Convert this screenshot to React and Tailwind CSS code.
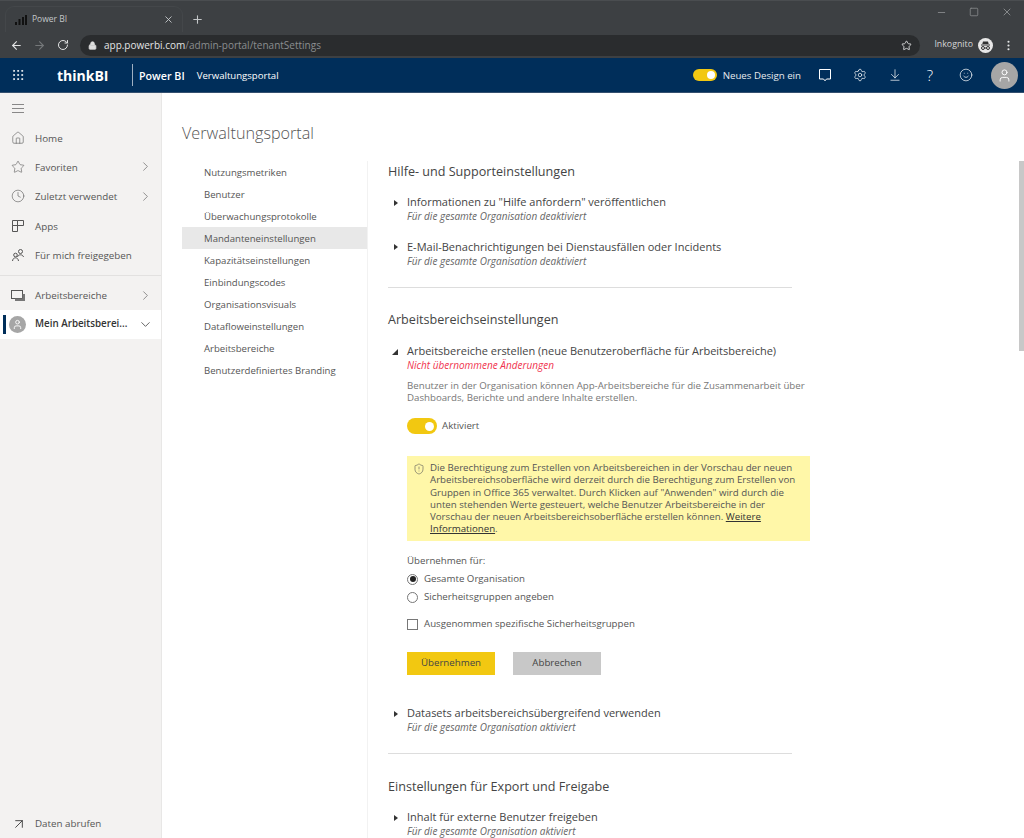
import React from 'react';
import {
  ArrowLeft, ArrowRight, RotateCw, Lock, Star, EllipsisVertical, X, Plus, Minus, Square,
  Grip, Settings, ArrowDownToLine, Smile, User, Clock, Home,
  ChevronRight, ChevronDown, ArrowUpRight, ShieldAlert,
} from 'lucide-react';

const font = 'font-["Open_Sans","Liberation_Sans",sans-serif]';

function AppsIcon() {
  return (
    <svg width="14" height="14" viewBox="0 0 14 14" fill="none" stroke="#555" strokeWidth="1">
      <path d="M1.5 1.5h5v5h-5zM6.5 1.5h6v5h-6zM1.5 6.5h5v6h-5z" />
    </svg>
  );
}

function SharedIcon() {
  return (
    <svg width="14" height="14" viewBox="0 0 14 14" fill="none" stroke="#555" strokeWidth="1">
      <circle cx="9.5" cy="3.5" r="2" />
      <path d="M6.5 9c.3-1.4 1.5-2.2 3-2.2s2.7.8 3 2.2" />
      <circle cx="4.5" cy="7" r="1.8" />
      <path d="M1.5 13c.2-2 1.4-3.2 3-3.2s2.8 1.2 3 3.2" />
    </svg>
  );
}

function WorkspaceIcon() {
  return (
    <svg width="15" height="13" viewBox="0 0 15 13">
      <rect x="0.5" y="1.5" width="11" height="8" fill="none" stroke="#555" />
      <path d="M4 9.5h7.5V5H14v7H4z" fill="#777" />
    </svg>
  );
}

function ChatIcon() {
  return (
    <svg width="14" height="14" viewBox="0 0 14 14" fill="none" stroke="currentColor" strokeWidth="1" className="ml-[17px]">
      <path d="M1.5 1.5h11V11H8.5L7 12.8 5.5 11h-4z" />
    </svg>
  );
}

function BarsIcon() {
  return (
    <svg width="12" height="10" viewBox="0 0 12 10" fill="#111">
      <rect x="0" y="7" width="2" height="3" />
      <rect x="3.5" y="4" width="2" height="6" />
      <rect x="7" y="2" width="2" height="8" />
      <rect x="10" y="0" width="2" height="10" />
    </svg>
  );
}

function IncognitoIcon() {
  return (
    <svg width="15" height="15" viewBox="0 0 15 15">
      <circle cx="7.5" cy="7.5" r="7.5" fill="#e8e8e8" />
      <path d="M3 6.5h9v1H3zM5 3.5h5l.7 2.5H4.3z" fill="#333" />
      <circle cx="5" cy="10" r="1.5" fill="none" stroke="#333" />
      <circle cx="10" cy="10" r="1.5" fill="none" stroke="#333" />
      <path d="M6.5 10h2" stroke="#333" />
    </svg>
  );
}

function Caret({ open }) {
  return (
    <svg width="19" height="14" viewBox="0 0 19 14" fill="#333" className="shrink-0">
      {open ? <polygon points="4,10 10,10 10,4" /> : <polygon points="6,4 10,7 6,10" />}
    </svg>
  );
}

function NavRow({ icon, label, chevron }) {
  return (
    <div className="h-[29.3px] flex items-center pl-[11px] pr-[8px] text-[#555]">
      <span className="w-[24px] flex">{icon}</span>
      <span className="flex-1 pt-[3px] text-[9.8px]">{label}</span>
      {chevron && <ChevronRight size={15} strokeWidth={1} />}
    </div>
  );
}

function Collapsed({ title, note }) {
  return (
    <div className="h-[44.5px]">
      <div className="flex items-center h-[14px] pt-[1px]">
        <Caret />
        <span className="text-[11px] text-[#444]">{title}</span>
      </div>
      <div className="pl-[19px] text-[10px] leading-[14px] italic text-[#666]">{note}</div>
    </div>
  );
}

const adminLinks = [
  'Nutzungsmetriken', 'Benutzer', 'Überwachungsprotokolle', 'Mandanteneinstellungen', 'Kapazitätseinstellungen',
  'Einbindungscodes', 'Organisationsvisuals', 'Datafloweinstellungen', 'Arbeitsbereiche', 'Benutzerdefiniertes Branding',
];

export default function App() {
  return (
    <div className={`w-[1024px] h-[838px] overflow-hidden flex flex-col bg-white ${font}`}>
      {/* browser tabs */}
      <div className="h-[32px] bg-[#3d4043] flex items-end pl-[6px] border-t border-[#4a4d50]">
        <div className="w-[176px] h-[25px] bg-[#3d4043] rounded-t-lg flex items-center pl-[9px] pr-[8px] text-[#c4c7c9] text-[8.5px] shadow-[0_0_0_1px_#44474a]">
          <BarsIcon />
          <span className="ml-[5px] flex-1">Power BI</span>
          <X size={11} />
        </div>
        <Plus size={13} className="ml-[9px] mb-[6px] text-[#c4c7c9]" />
        <div className="ml-auto flex items-center gap-[22px] pr-[11px] mb-[14px] text-[#85888a]">
          <Minus size={11} />
          <Square size={10} />
          <X size={12} />
        </div>
      </div>
      {/* address bar */}
      <div className="h-[26px] bg-[#3d4043] flex items-center pl-[10px] pr-[9px]">
        <ArrowLeft size={13} className="text-[#e3e4e5]" />
        <ArrowRight size={13} className="ml-[10px] text-[#75787a]" />
        <RotateCw size={12} className="ml-[11px] text-[#e3e4e5]" />
        <div className="ml-[11px] w-[841px] h-[21px] bg-[#2a2c2e] rounded-full flex items-center pl-[8px] pr-[8px] text-[10px]">
          <Lock size={9} fill="#ddd" className="text-[#ddd]" />
          <span className="ml-[7px] text-[#e3e4e5]">app.powerbi.com</span>
          <span className="text-[#8b8e90]">/admin-portal/tenantSettings</span>
          <Star size={11} className="ml-auto text-[#d9dadb]" />
        </div>
        <span className="ml-[14px] text-[8.8px] text-[#d5d6d7]">Inkognito</span>
        <span className="ml-[5px] flex"><IncognitoIcon /></span>
        <EllipsisVertical size={13} className="ml-[9px] text-[#e3e4e5]" />
      </div>
      {/* power bi header */}
      <div className="h-[35px] bg-[#002e5a] flex items-center pl-[11px] pr-[6px] text-white border-b border-[#34506f]">
        <Grip size={14} strokeWidth={1.5} />
        <span className="ml-[32px] w-[75px] pt-[1px] text-[14px] font-bold">thinkBI</span>
        <span className="h-[22px] border-l border-[#9fb0c2]" />
        <span className="ml-[6px] pt-[2px] text-[10.7px] font-semibold">Power BI</span>
        <span className="ml-[12px] pt-[2px] text-[9.6px]">Verwaltungsportal</span>
        <span className="ml-auto w-[24px] h-[12px] rounded-full bg-[#f2c811] flex items-center justify-end pr-[2px]">
          <span className="w-[8px] h-[8px] rounded-full bg-white" />
        </span>
        <span className="ml-[6px] pt-[2px] text-[9.7px] text-[#e6eaee]">Neues Design ein</span>
        <ChatIcon />
        <Settings size={14} strokeWidth={1.2} className="ml-[21px]" />
        <ArrowDownToLine size={14} strokeWidth={1.2} className="ml-[21px]" />
        <span className="ml-[21px] w-[14px] text-center text-[15px] font-light leading-none">?</span>
        <Smile size={14} strokeWidth={1.2} className="ml-[22px]" />
        <span className="ml-[18px] w-[27px] h-[27px] rounded-full bg-[#a6a6a6] flex items-center justify-center">
          <User size={15} strokeWidth={1.5} />
        </span>
      </div>
      <div className="flex-1 flex min-h-0">
        {/* left nav */}
        <aside className="w-[162px] bg-[#f3f2f1] border-r border-[#e8e7e6] flex flex-col">
          <div className="h-[30px] flex flex-col justify-center gap-[3px] pl-[12px]">
            <span className="w-[12px] h-px bg-[#888]" />
            <span className="w-[12px] h-px bg-[#888]" />
            <span className="w-[12px] h-px bg-[#888]" />
          </div>
          <NavRow icon={<Home size={14} strokeWidth={1} />} label="Home" />
          <NavRow icon={<Star size={14} strokeWidth={1} />} label="Favoriten" chevron />
          <NavRow icon={<Clock size={14} strokeWidth={1} />} label="Zuletzt verwendet" chevron />
          <NavRow icon={<AppsIcon />} label="Apps" />
          <NavRow icon={<SharedIcon />} label="Für mich freigegeben" />
          <div className="mt-[6px] mb-[4px] border-t border-[#e2e1e0]" />
          <NavRow icon={<WorkspaceIcon />} label="Arbeitsbereiche" chevron />
          <div className="h-[29px] bg-white flex items-center pl-[3px] pr-[8px] text-[#333]">
            <span className="w-[3px] h-[19px] bg-[#002e5a]" />
            <span className="ml-[3px] w-[17px] h-[17px] rounded-full bg-[#a6a6a6] flex items-center justify-center text-white">
              <User size={11} />
            </span>
            <span className="ml-[9px] flex-1 pt-[1px] text-[9.8px] font-semibold">Mein Arbeitsberei...</span>
            <ChevronDown size={15} strokeWidth={1.2} />
          </div>
          <div className="mt-auto h-[28px] flex items-center pl-[11px] text-[#555]">
            <ArrowUpRight size={16} strokeWidth={1.3} className="text-[#333]" />
            <span className="ml-[8px] pt-[1px] text-[9.8px]">Daten abrufen</span>
          </div>
        </aside>
        {/* main */}
        <main className="flex-1 flex min-w-0">
          <div className="flex-1 pl-[20px] min-w-0">
            <h1 className="mt-[28px] text-[16.2px] leading-[24px] font-light text-[#555]">Verwaltungsportal</h1>
            <div className="flex mt-[16px]">
              <nav className="w-[185px] shrink-0">
                {adminLinks.map((l) => (
                  <div key={l} className={`h-[22px] flex items-center pl-[22px] pt-[2px] text-[9.6px] text-[#555] ${l === 'Mandanteneinstellungen' ? 'bg-[#e8e8e8]' : ''}`}>{l}</div>
                ))}
              </nav>
              <section className="border-l border-[#f2f2f2] pl-[20px] w-[625px] h-[700px]">
                <h2 className="h-[20px] pt-[1px] text-[12.6px] leading-[20px] text-[#444]">Hilfe- und Supporteinstellungen</h2>
                <div className="mt-[14px]">
                  <Collapsed title={'Informationen zu "Hilfe anfordern" veröffentlichen'} note="Für die gesamte Organisation deaktiviert" />
                  <Collapsed title="E-Mail-Benachrichtigungen bei Dienstausfällen oder Incidents" note="Für die gesamte Organisation deaktiviert" />
                </div>
                <div className="w-[404px] border-t border-[#ddd] mt-[3px]" />
                <h2 className="mt-[21px] h-[20px] pt-[1px] text-[12.6px] leading-[20px] text-[#444]">Arbeitsbereichseinstellungen</h2>
                <div className="mt-[15px]">
                  <div className="flex items-center h-[14px] pt-[1px]">
                    <Caret open />
                    <span className="text-[11px] text-[#444]">Arbeitsbereiche erstellen (neue Benutzeroberfläche für Arbeitsbereiche)</span>
                  </div>
                  <div className="pl-[19px]">
                    <div className="text-[10px] leading-[14px] italic text-[#f0334e]">Nicht übernommene Änderungen</div>
                    <p className="mt-[8px] w-[410px] text-[9.7px] leading-[12px] text-[#777]">
                      Benutzer in der Organisation können App-Arbeitsbereiche für die Zusammenarbeit über<br />Dashboards, Berichte und andere Inhalte erstellen.
                    </p>
                    <div className="mt-[14px] flex items-center">
                      <span className="w-[30px] h-[16px] rounded-full bg-[#f2c811] flex items-center justify-end pr-[3px]">
                        <span className="w-[9px] h-[9px] rounded-full bg-white" />
                      </span>
                      <span className="ml-[5px] text-[9.7px] text-[#555]">Aktiviert</span>
                    </div>
                    <div className="mt-[22px] w-[403px] h-[85px] bg-[#fff7a8] flex pl-[6px] pt-[6px] text-[#555]">
                      <ShieldAlert size={12} strokeWidth={1.2} className="mt-[1px] shrink-0" />
                      <p className="ml-[5px] text-[9.7px] leading-[12.3px] whitespace-nowrap">
                        Die Berechtigung zum Erstellen von Arbeitsbereichen in der Vorschau der neuen<br />
                        Arbeitsbereichsoberfläche wird derzeit durch die Berechtigung zum Erstellen von<br />
                        Gruppen in Office 365 verwaltet. Durch Klicken auf "Anwenden" wird durch die<br />
                        unten stehenden Werte gesteuert, welche Benutzer Arbeitsbereiche in der<br />
                        Vorschau der neuen Arbeitsbereichsoberfläche erstellen können. <span className="underline text-[#333]">Weitere<br />Informationen</span>.
                      </p>
                    </div>
                    <div className="mt-[13px] text-[9.7px] leading-[14px] text-[#555]">Übernehmen für:</div>
                    <div className="mt-[2px] h-[18px] flex items-center text-[9.7px] text-[#555]">
                      <span className="w-[11px] h-[11px] rounded-full border border-[#777] flex items-center justify-center">
                        <span className="w-[6px] h-[6px] rounded-full bg-[#222]" />
                      </span>
                      <span className="ml-[6px]">Gesamte Organisation</span>
                    </div>
                    <div className="h-[18px] flex items-center text-[9.7px] text-[#555]">
                      <span className="w-[11px] h-[11px] rounded-full border border-[#777]" />
                      <span className="ml-[6px]">Sicherheitsgruppen angeben</span>
                    </div>
                    <div className="mt-[9px] h-[18px] flex items-center text-[9.7px] text-[#555]">
                      <span className="w-[11px] h-[11px] border border-[#777]" />
                      <span className="ml-[6px]">Ausgenommen spezifische Sicherheitsgruppen</span>
                    </div>
                    <div className="mt-[19px] flex gap-[18px]">
                      <button className="w-[88px] h-[23px] bg-[#f2c811] text-[9.7px] text-[#444]">Übernehmen</button>
                      <button className="w-[88px] h-[23px] bg-[#c8c8c8] text-[9.7px] text-[#444]">Abbrechen</button>
                    </div>
                  </div>
                </div>
                <div className="mt-[31px]">
                  <Collapsed title="Datasets arbeitsbereichsübergreifend verwenden" note="Für die gesamte Organisation aktiviert" />
                </div>
                <div className="w-[404px] border-t border-[#ddd] mt-[2.5px]" />
                <h2 className="mt-[22px] h-[20px] pt-[1px] text-[12.6px] leading-[20px] text-[#444]">Einstellungen für Export und Freigabe</h2>
                <div className="mt-[14px]">
                  <Collapsed title="Inhalt für externe Benutzer freigeben" note="Für die gesamte Organisation aktiviert" />
                </div>
              </section>
            </div>
          </div>
          <div className="w-[5px] shrink-0 pt-[68px]">
            <div className="h-[190px] bg-[#c8c8c8]" />
          </div>
        </main>
      </div>
    </div>
  );
}
